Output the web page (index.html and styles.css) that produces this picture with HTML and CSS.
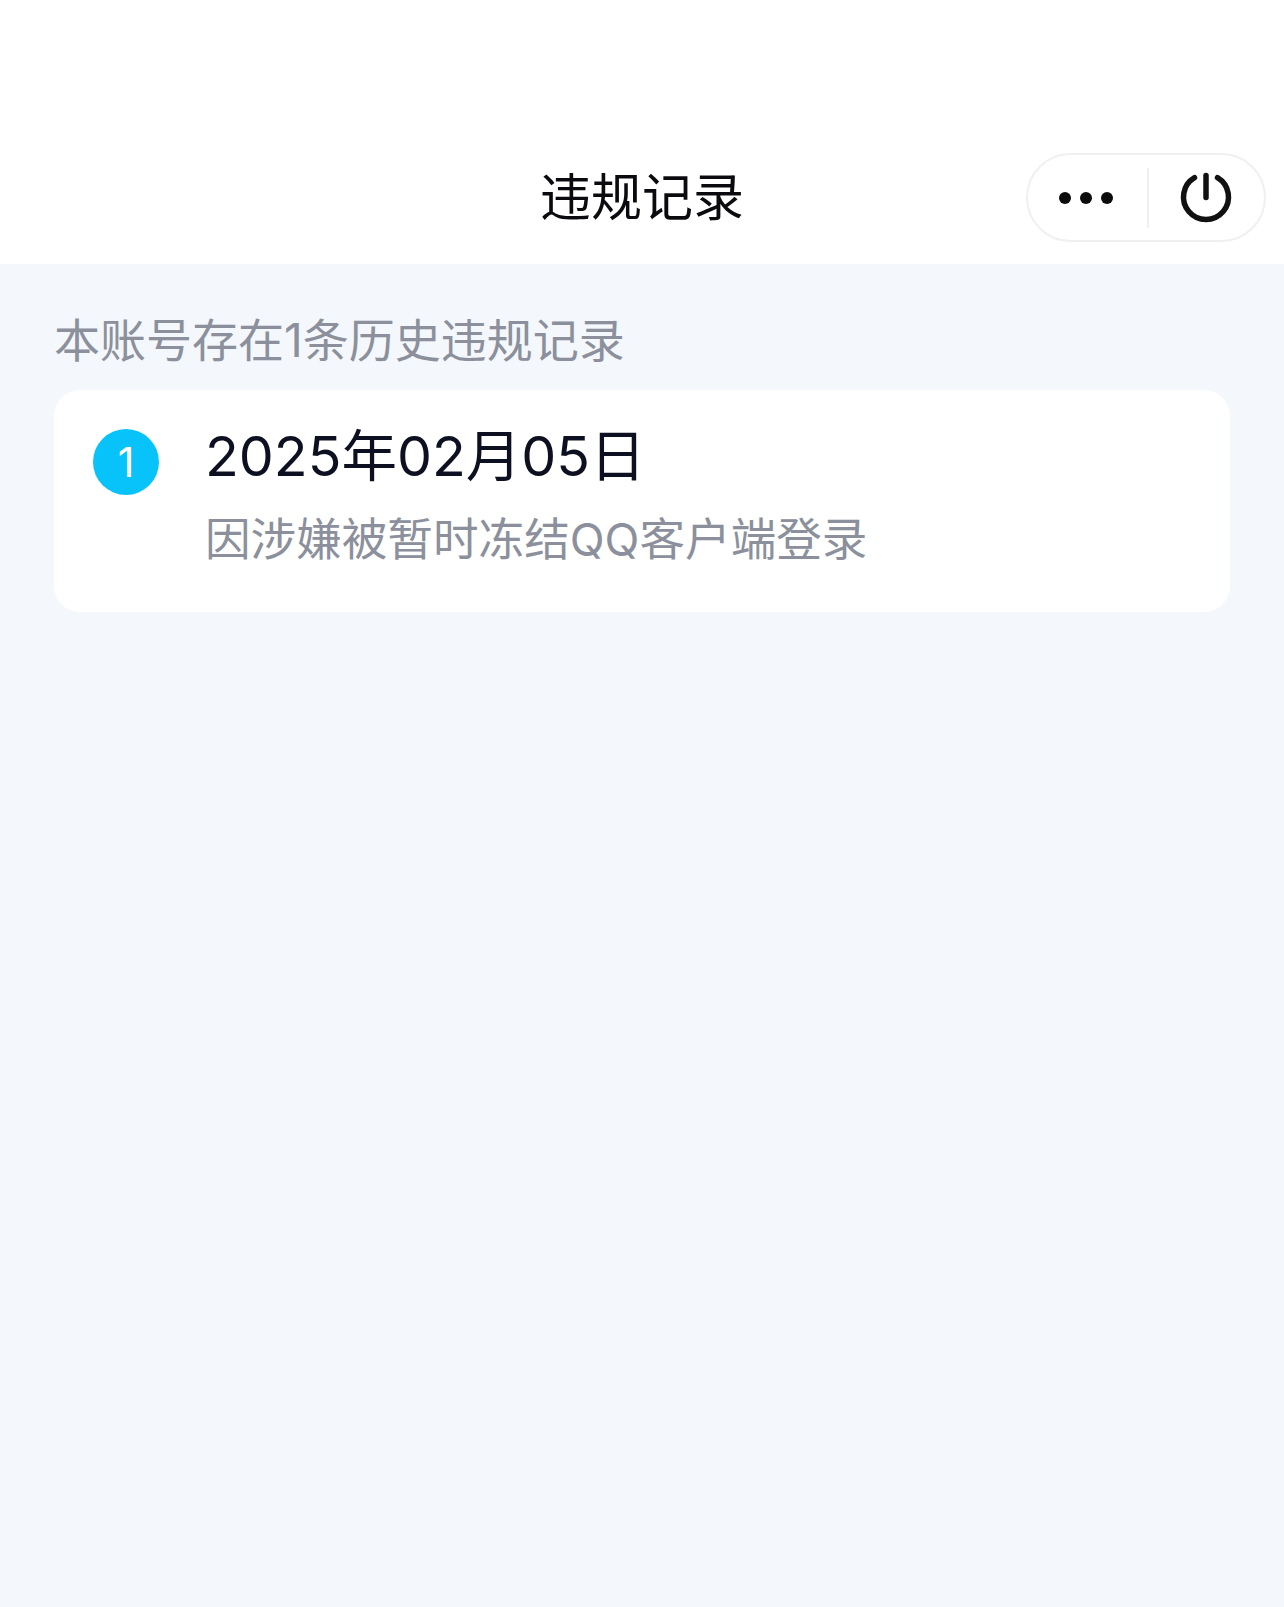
FILE: index.html
```html
<!DOCTYPE html>
<html lang="zh-CN">
<head>
    <meta charset="UTF-8">
    <meta name="viewport" content="width=device-width, initial-scale=1.0">
    <title>违规记录</title>
    <link rel="stylesheet" href="styles.css">
</head>
<body>

    <header class="nav-bar">
        <div class="nav-side"></div>
        <h1 class="nav-title">违规记录</h1>
        <div class="nav-side nav-side-right">
            <div class="capsule">
                <div class="capsule-more">
                    <span class="dot"></span><span class="dot"></span><span class="dot"></span>
                </div>
                <div class="capsule-line"></div>
                <div class="capsule-close">
                    <svg class="power-icon" viewBox="0 0 56 56" fill="none" stroke="#111" stroke-width="5.5" stroke-linecap="round">
                        <path d="M28 5.5V27.5"/>
                        <path d="M16.5 7.7A22.5 22.5 0 1 0 39.5 7.7"/>
                    </svg>
                </div>
            </div>
        </div>
    </header>

    <main class="content">
        <p class="summary">本账号存在1条历史违规记录</p>
        <section class="record-card">
            <div class="record-num">1</div>
            <div class="record-body">
                <div class="record-date">2025年02月05日</div>
                <div class="record-reason">因涉嫌被暂时冻结QQ客户端登录</div>
            </div>
        </section>
    </main>

</body>
</html>
```

FILE: styles.css
```css
* { box-sizing: border-box; }
html, body { margin: 0; padding: 0; }
body { min-height: 1607px; background-color: #f4f7fb; font-family: Inter, "Noto Sans CJK SC", sans-serif; }

.nav-bar { display: grid; grid-template-columns: 1fr auto 1fr; align-items: center; height: 264px; padding: 153px 18px 22px; background-color: #fff; }
.nav-side-right { display: flex; justify-content: flex-end; }
.nav-title { margin: 0; font-size: 51px; font-weight: 400; line-height: 89px; color: #0b0b0f; }

.capsule { display: flex; align-items: center; width: 240px; height: 89px; border: 2px solid #f0f0f1; border-radius: 45px; background-color: #fff; }
.capsule-more { display: flex; justify-content: center; align-items: center; gap: 9px; width: 119px; padding-right: 4px; }
.dot { width: 12px; height: 12px; border-radius: 50%; background-color: #0c0c0c; }
.capsule-line { width: 2px; height: 60px; background-color: #f0f0f1; }
.capsule-close { display: flex; justify-content: center; align-items: center; flex: 1; padding-right: 2px; }
.power-icon { width: 56px; height: 56px; }

.content { padding: 0 54px; }
.summary { margin: 0; padding-top: 47px; font-size: 46px; line-height: 58px; color: #8b909c; }

.record-card { display: flex; height: 222px; margin-top: 21px; padding: 39px 39px 0; border-radius: 26px; background-color: #fff; }
.record-num { flex: none; width: 66px; height: 66px; border-radius: 50%; background-color: #08c3fa; color: #fff; font-size: 41px; font-weight: 400; line-height: 66px; text-align: center; }
.record-body { margin-left: 46px; margin-top: -15px; }
.record-date { font-size: 55.5px; line-height: 84px; color: #0d1020; }
.record-reason { font-size: 45.6px; line-height: 72px; margin-top: 6px; color: #8b909c; }
```
